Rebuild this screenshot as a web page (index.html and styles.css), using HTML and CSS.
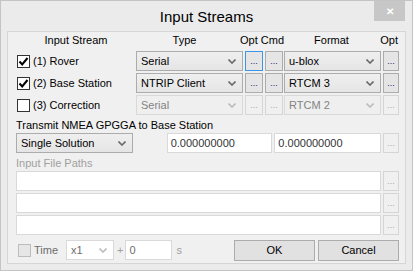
FILE: index.html
```html
<!DOCTYPE html>
<html lang="en">
<head>
    <meta charset="UTF-8">
    <title>Input Streams</title>
    <link rel="stylesheet" href="styles.css">
</head>
<body>
    <div class="window">
        <!-- Title bar -->
        <div class="titlebar">
            <span class="title">Input Streams</span>
            <span class="close">&#x2715;</span>
        </div>

        <div class="panel">
            <!-- Stream table -->
            <div class="streams">
                <div class="hd hd-stream">Input Stream</div>
                <div class="hd hd-type">Type</div>
                <div class="hd hd-optcmd">Opt Cmd</div>
                <div class="hd hd-format">Format</div>
                <div class="hd hd-opt">Opt</div>

                <label class="check"><span class="box"><svg viewBox="0 0 11 11"><path d="M1.5 5.5 L4.2 8.5 L9.5 2" /></svg></span>(1) Rover</label>
                <div class="combo type">Serial<svg class="arrow" viewBox="0 0 8 5"><path d="M0.5 0.5 L4 4 L7.5 0.5" /></svg></div>
                <button class="dots focus">...</button>
                <button class="dots">...</button>
                <div class="combo format">u-blox<svg class="arrow" viewBox="0 0 8 5"><path d="M0.5 0.5 L4 4 L7.5 0.5" /></svg></div>
                <button class="dots small">...</button>

                <label class="check"><span class="box"><svg viewBox="0 0 11 11"><path d="M1.5 5.5 L4.2 8.5 L9.5 2" /></svg></span>(2) Base Station</label>
                <div class="combo type">NTRIP Client<svg class="arrow" viewBox="0 0 8 5"><path d="M0.5 0.5 L4 4 L7.5 0.5" /></svg></div>
                <button class="dots">...</button>
                <button class="dots">...</button>
                <div class="combo format">RTCM 3<svg class="arrow" viewBox="0 0 8 5"><path d="M0.5 0.5 L4 4 L7.5 0.5" /></svg></div>
                <button class="dots small">...</button>

                <label class="check"><span class="box"></span>(3) Correction</label>
                <div class="combo type off">Serial<svg class="arrow" viewBox="0 0 8 5"><path d="M0.5 0.5 L4 4 L7.5 0.5" /></svg></div>
                <button class="dots off">...</button>
                <button class="dots off">...</button>
                <div class="combo format off">RTCM 2<svg class="arrow" viewBox="0 0 8 5"><path d="M0.5 0.5 L4 4 L7.5 0.5" /></svg></div>
                <button class="dots small off">...</button>
            </div>

            <!-- NMEA position -->
            <div class="label">Transmit NMEA GPGGA to Base Station</div>
            <div class="nmea-row">
                <div class="combo nmea">Single Solution<svg class="arrow" viewBox="0 0 8 5"><path d="M0.5 0.5 L4 4 L7.5 0.5" /></svg></div>
                <div class="field pos1">0.000000000</div>
                <div class="field pos2">0.000000000</div>
                <button class="dots small off">...</button>
            </div>

            <!-- Input files -->
            <div class="label off">Input File Paths</div>
            <div class="path-row">
                <div class="field path"></div>
                <button class="dots small off">...</button>
            </div>
            <div class="path-row">
                <div class="field path"></div>
                <button class="dots small off">...</button>
            </div>
            <div class="path-row">
                <div class="field path"></div>
                <button class="dots small off">...</button>
            </div>

            <!-- Time and dialog buttons -->
            <div class="bottom-row">
                <label class="check off"><span class="box"></span>Time</label>
                <div class="combo speed off">x1<svg class="arrow" viewBox="0 0 8 5"><path d="M0.5 0.5 L4 4 L7.5 0.5" /></svg></div>
                <span class="plus">+</span>
                <div class="field offset off">0</div>
                <span class="unit">s</span>
                <button class="btn ok">OK</button>
                <button class="btn">Cancel</button>
            </div>
        </div>
    </div>
</body>
</html>
```

FILE: styles.css
```css
/* General */
* {
    box-sizing: border-box;
    margin: 0;
    padding: 0;
}

body {
    background-color: #ebebeb;
    font-family: "Liberation Sans", Arial, sans-serif;
    font-size: 11px;
    color: #000000;
}

.window {
    width: 413px;
    height: 271px;
    border: 1px solid #c4c4c4;
    background-color: #ebebeb;
    padding: 0 6px 6px 6px;
    display: flex;
    flex-direction: column;
}

/* Title bar */
.titlebar {
    height: 30px;
    position: relative;
    display: flex;
    align-items: center;
    justify-content: center;
}

.title {
    font-size: 15px;
    margin-top: 1px;
}

.close {
    position: absolute;
    top: 0;
    right: 1px;
    width: 31px;
    height: 20px;
    background-color: #c7c7c7;
    color: #ffffff;
    font-size: 10px;
    font-weight: bold;
    display: flex;
    align-items: center;
    justify-content: center;
}

/* Content panel */
.panel {
    flex: 1;
    background-color: #f0f0f0;
    border: 1px solid #d6d6d6;
    padding: 0 6px 0 8px;
    display: flex;
    flex-direction: column;
}

/* Stream table */
.streams {
    display: grid;
    grid-template-columns: 120px 109px 20px 19px 99px 15px;
    grid-template-rows: 17px 20px 20px 20px;
    row-gap: 2px;
    align-items: center;
}

.hd {
    line-height: 17px;
    white-space: nowrap;
}

.hd-stream {
    text-align: center;
}

.hd-type {
    text-align: center;
    padding-right: 12px;
}

.hd-optcmd {
    grid-column: span 2;
    justify-self: start;
    margin-left: -5px;
}

.hd-format {
    text-align: center;
    padding-right: 4px;
}

.hd-opt {
    justify-self: end;
}

/* Checkbox with label */
.check {
    display: flex;
    align-items: center;
    gap: 3px;
    white-space: nowrap;
    padding-left: 1px;
}

.box {
    width: 13px;
    height: 13px;
    border: 1px solid #333333;
    background-color: #ffffff;
    display: flex;
    align-items: center;
    justify-content: center;
}

.box svg {
    width: 11px;
    height: 11px;
    fill: none;
    stroke: #000000;
    stroke-width: 2;
}

.check.off {
    color: #6d6d6d;
}

.check.off .box {
    border-color: #bcbcbc;
    background-color: #e6e6e6;
}

/* Combo boxes */
.combo {
    height: 20px;
    border: 1px solid #acacac;
    background: linear-gradient(#efefef, #e5e5e5);
    display: flex;
    align-items: center;
    justify-content: space-between;
    padding: 0 6px 0 4px;
    white-space: nowrap;
}

.combo .arrow {
    width: 8px;
    height: 5px;
    fill: none;
    stroke: #6a6a6a;
    stroke-width: 1.6;
}

.combo.off {
    border-color: #d9d9d9;
    background: #efefef;
    color: #838383;
}

.combo.off .arrow {
    stroke: #bcbcbc;
}

.combo.type {
    width: 107px;
}

.combo.format {
    width: 97px;
}

.combo.nmea {
    width: 117px;
}

.combo.speed {
    width: 48px;
    background: #ffffff;
    border-color: #d9d9d9;
    color: #6d6d6d;
}

/* Small "..." buttons */
.dots {
    width: 18px;
    height: 20px;
    border: 1px solid #acacac;
    background-color: #e5e5e5;
    font-family: inherit;
    font-size: 9px;
    color: #1c1c6e;
    line-height: 14px;
}

.dots.small {
    width: 16px;
}

.dots.focus {
    border-color: #3c95e6;
}

.dots.off {
    border-color: #d5d5d5;
    background-color: #f0f0f0;
    color: #a6a6a6;
}

/* Labels */
.label {
    height: 18px;
    line-height: 20px;
    white-space: nowrap;
}

.label.off {
    color: #a0a0a0;
}

/* Text fields */
.field {
    height: 20px;
    border: 1px solid #d9d9d9;
    background-color: #ffffff;
    padding: 0 3px;
    line-height: 18px;
    color: #333333;
}

.nmea-row {
    display: flex;
    align-items: center;
    gap: 2px;
}

.field.pos1 {
    width: 106px;
    margin-left: 32px;
}

.field.pos2 {
    width: 107px;
}

.path-row {
    display: flex;
    align-items: center;
    gap: 2px;
    margin-bottom: 2px;
}

.field.path {
    width: 365px;
}

/* Bottom row */
.bottom-row {
    display: flex;
    align-items: center;
    margin-top: 2px;
    height: 22px;
}

.bottom-row .check {
    width: 50px;
    padding-left: 2px;
}

.plus {
    color: #a0a0a0;
    margin: 0 2px 0 3px;
}

.field.offset {
    width: 47px;
    color: #6d6d6d;
}

.unit {
    color: #a0a0a0;
    margin-left: 4px;
    flex: 1;
}

.btn {
    width: 81px;
    height: 21px;
    border: 1px solid #acacac;
    background-color: #e1e1e1;
    font-family: inherit;
    font-size: 11px;
    color: #000000;
}

.btn.ok {
    margin-right: 3px;
}
```
